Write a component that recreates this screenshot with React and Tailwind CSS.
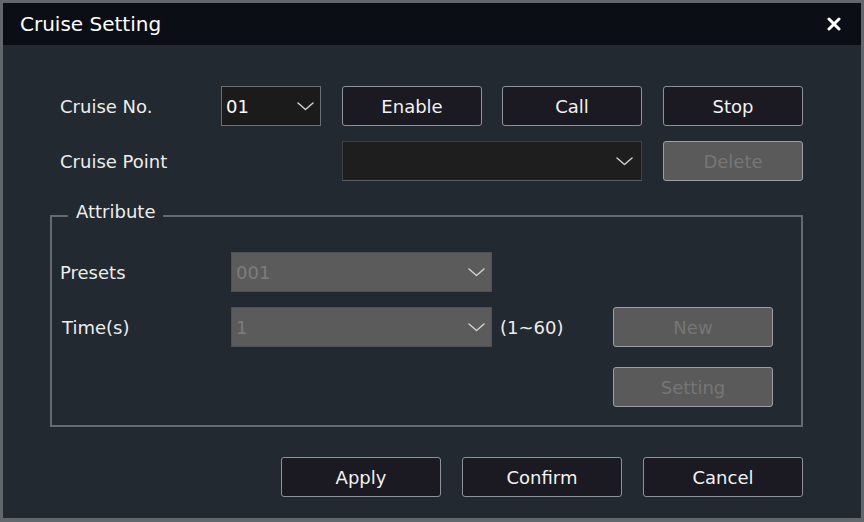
import React from 'react';

const font = { fontFamily: '"DejaVu Sans", "Noto Sans", sans-serif' };

function Chevron({ className = 'stroke-[#d0d0d0]' }) {
    return (
        <svg width="17" height="9" viewBox="0 0 17 9" className={className} fill="none">
            <path d="M1 1 L8.5 7.5 L16 1" strokeWidth="1.5" strokeLinecap="round" strokeLinejoin="round" />
        </svg>
    );
}

function Btn({ children, width = 'w-[140px]', disabled = false }) {
    const base = disabled
        ? 'bg-[#5a5a5a] border-[#9aa0a6] text-[#767676]'
        : 'bg-[#1b1a22] border-[#8d939a] text-[#f2f2f2]';
    return (
        <div className={`${width} h-[40px] shrink-0 rounded-[3px] border flex items-center justify-center text-[18px] ${base}`}>
            {children}
        </div>
    );
}

export default function App() {
    return (
        <div style={font} className="w-[864px] h-[522px] bg-[#62676c] pt-[3px] pl-[3px] pr-[3px] pb-[4px] flex flex-col">
            {/* Title bar */}
            <div className="h-[42px] bg-[#0b0f15] flex items-center justify-between pl-[17px] pr-[20px] shrink-0">
                <span className="text-[20px] text-white">Cruise Setting</span>
                <svg width="14" height="14" viewBox="0 0 14 14">
                    <path d="M2 2 L12 12 M12 2 L2 12" stroke="#ffffff" strokeWidth="3" strokeLinecap="round" />
                </svg>
            </div>

            {/* Body */}
            <div className="flex-1 bg-[#222930] pt-[41px] pl-[57px] text-[#ededed]">
                {/* Cruise No. */}
                <div className="flex items-center">
                    <div className="w-[161px] text-[18px]">Cruise No.</div>
                    <div className="w-[100px] h-[40px] bg-[#1c1b1b] border border-[#6c7075] flex items-center justify-between pl-[4px] pr-[6px] text-[18px] text-white">
                        <span>01</span>
                        <Chevron />
                    </div>
                    <div className="flex gap-[20px] ml-[21px]">
                        <Btn>Enable</Btn>
                        <Btn>Call</Btn>
                        <div className="ml-[1px]"><Btn>Stop</Btn></div>
                    </div>
                </div>

                {/* Cruise Point */}
                <div className="flex items-center mt-[15px]">
                    <div className="w-[282px] text-[18px]">Cruise Point</div>
                    <div className="w-[300px] h-[40px] bg-[#1e1e1e] border border-[#3c4148] border-b-[#5a5f65] flex items-center justify-end pr-[8px]">
                        <Chevron />
                    </div>
                    <div className="ml-[21px]">
                        <Btn disabled>Delete</Btn>
                    </div>
                </div>

                {/* Attribute group */}
                <div className="relative w-[753px] ml-[-10px] mt-[34px] border-2 border-[#646a71] pt-[35px] pl-[8px] pb-[18px]">
                    <span className="absolute -top-[18px] left-[16px] px-[8px] bg-[#222930] text-[18px] leading-[26px]">Attribute</span>

                    <div className="flex items-center">
                        <div className="w-[171px] text-[18px]">Presets</div>
                        <div className="w-[261px] h-[40px] bg-[#5b5b5b] border border-[#4d5258] flex items-center justify-between pl-[4px] pr-[6px]">
                            <span className="text-[18px] text-[#7d7d7d]">001</span>
                            <Chevron />
                        </div>
                    </div>

                    <div className="flex items-center mt-[15px]">
                        <div className="w-[171px] pl-[2px] text-[18px]">Time(s)</div>
                        <div className="w-[261px] h-[40px] bg-[#5b5b5b] border border-[#4d5258] flex items-center justify-between pl-[4px] pr-[6px]">
                            <span className="text-[18px] text-[#7d7d7d]">1</span>
                            <Chevron />
                        </div>
                        <span className="ml-[8px] w-[113px] text-[18px]">(1~60)</span>
                        <Btn width="w-[160px]" disabled>New</Btn>
                    </div>

                    <div className="flex mt-[20px] pl-[553px]">
                        <Btn width="w-[160px]" disabled>Setting</Btn>
                    </div>
                </div>

                {/* Footer buttons */}
                <div className="flex gap-[21px] mt-[30px] ml-[221px]">
                    <Btn width="w-[160px]">Apply</Btn>
                    <Btn width="w-[160px]">Confirm</Btn>
                    <Btn width="w-[160px]">Cancel</Btn>
                </div>
            </div>
        </div>
    );
}
